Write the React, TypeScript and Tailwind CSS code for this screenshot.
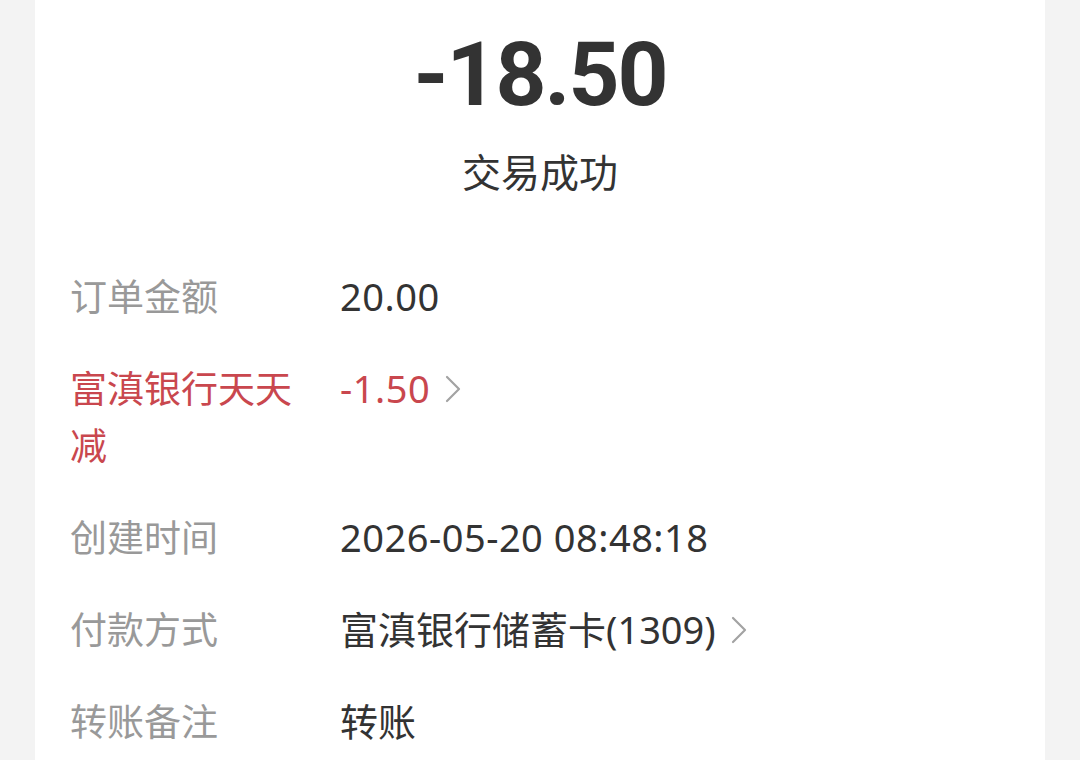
import React from "react";

const FONT = '"Noto Sans", "Noto Sans CJK SC", sans-serif';

type Row = { label: string; value: string; red?: boolean; link?: boolean; num?: boolean };

const ROWS: Row[] = [
  { label: "订单金额", value: "20.00", num: true },
  { label: "富滇银行天天减", value: "-1.50", red: true, link: true, num: true },
  { label: "创建时间", value: "2026-05-20 08:48:18", num: true },
  { label: "付款方式", value: "富滇银行储蓄卡(1309)", link: true },
  { label: "转账备注", value: "转账" },
];

function Chevron() {
  return (
    <svg width="18" height="30" viewBox="0 0 18 30" fill="none" className="shrink-0">
      <polyline points="3,3 15,15 3,27" stroke="#a3a3a3" strokeWidth="2.2" strokeLinecap="round" strokeLinejoin="round" />
    </svg>
  );
}

export default function App() {
  return (
    <div className="min-h-screen bg-[#f3f3f3]" style={{ fontFamily: FONT }}>
      <div className="mx-[35px] h-[760px] overflow-hidden bg-white">
        {/* Amount header */}
        <div className="flex flex-col items-center pt-[30px]">
          <div
            className="text-[89px] font-bold leading-[90px] tracking-[-2px] text-[#333333]"
            style={{ fontFamily: 'Roboto, "Noto Sans", sans-serif' }}
          >
            -18.50
          </div>
          <div className="mt-[23px] text-[39px] leading-[57px] text-[#333333]">交易成功</div>
        </div>

        {/* Detail rows */}
        <div className="mt-[68px] flex flex-col gap-[35px] pl-[35px]">
          {ROWS.map((r) => (
            <div key={r.label} className="flex items-start">
              <div
                className={`w-[235px] text-[37px] leading-[57px] ${r.red ? "text-[#c9474e]" : "text-[#999999]"}`}
              >
                {r.label}
              </div>
              <div className="ml-[35px] flex h-[57px] items-center gap-[14px]">
                <span
                  className={`text-[38px] leading-[57px] ${r.num ? "tracking-[0.5px]" : ""} ${r.red ? "text-[#c9474e]" : "text-[#333333]"}`}
                >
                  {r.value}
                </span>
                {r.link && <Chevron />}
              </div>
            </div>
          ))}
        </div>
      </div>
    </div>
  );
}
